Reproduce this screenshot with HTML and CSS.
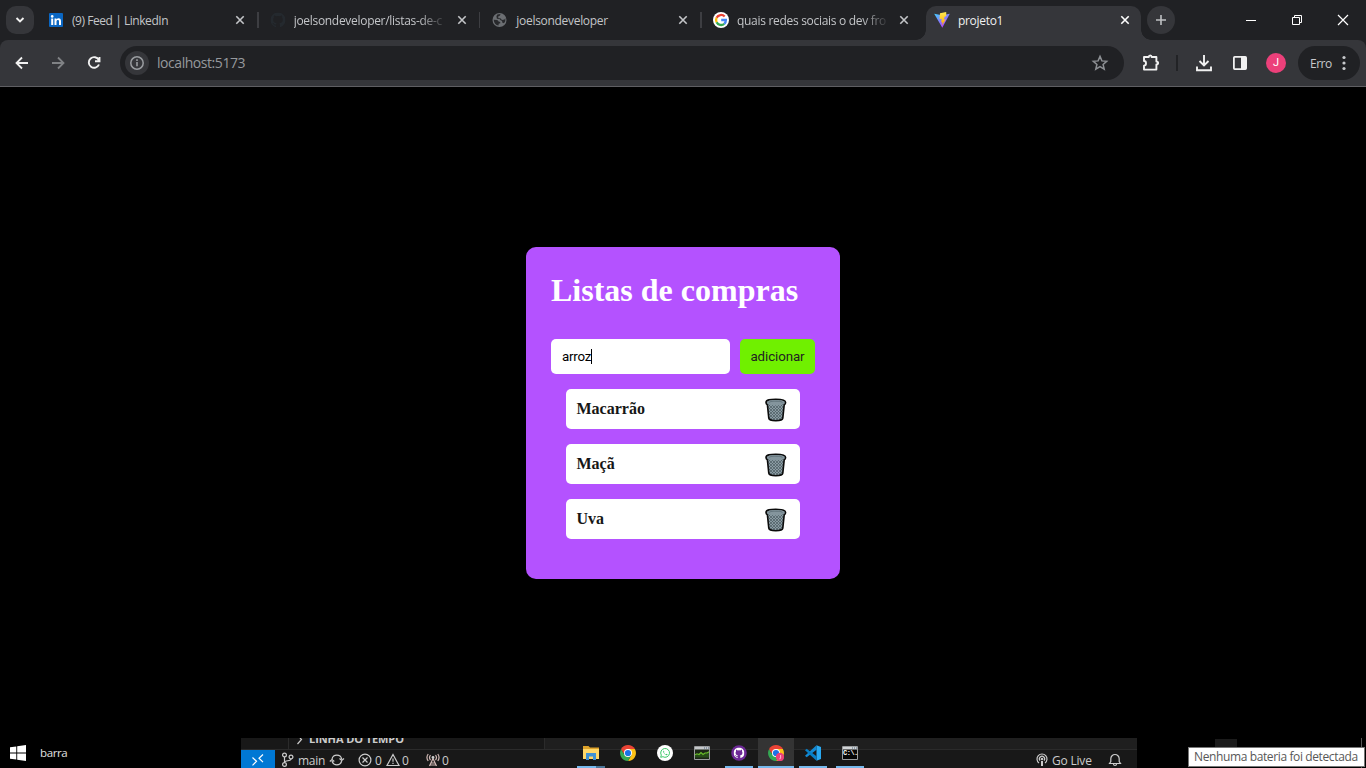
FILE: index.html
```html
<!DOCTYPE html>
<html lang="pt-BR">
<head>
<meta charset="utf-8">
<title>projeto1</title>
<link rel="stylesheet" href="styles.css">
</head>
<body>
<svg class="defs" width="0" height="0">
  <symbol id="close" viewBox="0 0 16 16"><path d="M4.300 4.300l7.400 7.400M11.700 4.300l-7.400 7.400" stroke="currentColor" stroke-width="1.600"/></symbol>
  <symbol id="github" viewBox="0 0 16 16"><path fill="currentColor" d="M8 0C3.58 0 0 3.58 0 8c0 3.54 2.29 6.53 5.47 7.59.4.07.55-.17.55-.38 0-.19-.01-.82-.01-1.49-2.01.37-2.53-.49-2.69-.94-.09-.23-.48-.94-.82-1.13-.28-.15-.68-.52-.01-.53.63-.01 1.08.58 1.23.82.72 1.21 1.87.87 2.33.66.07-.52.28-.87.51-1.07-1.78-.2-3.64-.89-3.64-3.95 0-.87.31-1.59.82-2.15-.08-.2-.36-1.02.08-2.12 0 0 .67-.21 2.2.82a7.4 7.4 0 014 0c1.53-1.04 2.2-.82 2.2-.82.44 1.1.16 1.92.08 2.12.51.56.82 1.27.82 2.15 0 3.07-1.87 3.75-3.65 3.95.29.25.54.73.54 1.48 0 1.07-.01 1.93-.01 2.2 0 .21.15.46.55.38A8 8 0 0016 8c0-4.42-3.58-8-8-8z"/></symbol>
  <symbol id="chrome" viewBox="0 0 16 16"><path fill="#ea4335" d="M8 8L1.100 4A8 8 0 0114.900 4z"/><path fill="#fbc116" d="M8 4h6.900A8 8 0 018 16l3.500-6z"/><path fill="#34a853" d="M1.100 4l3.500 6L8 12l3.400-2L8 16A8 8 0 011.100 4z"/><path fill="#ea4335" d="M1.100 4H8v4H3.400z"/><circle cx="8" cy="8" r="4" fill="#fff"/><circle cx="8" cy="8" r="3.100" fill="#1a73e8"/></symbol>
  <pattern id="mesh" width="3" height="3" patternUnits="userSpaceOnUse"><rect width="3" height="3" fill="#8a9ba3"/><path d="M0 0l3 3M3 0L0 3" stroke="#4a5a62" stroke-width=".7"/></pattern>
  <symbol id="trash" viewBox="0 0 22 24"><path d="M1 4.500C1 1.700 5.500 1.200 10.800 1.200s9.800.5 9.800 3.300c0 1.500-.6 2-1.400 2.400L17.800 20.200c-.2 1.900-3.600 2.500-7 2.500s-6.800-.6-7-2.500L2.400 6.900C1.600 6.500 1 6 1 4.500z" fill="url(#mesh)" stroke="#0b0b0b" stroke-width="1.600"/><path d="M2 4.500c0-1.700 4-2.400 8.800-2.400s8.800.7 8.800 2.400-4 2.900-8.800 2.900S2 6.200 2 4.500z" fill="#84959d"/><path d="M4.300 4.700c0-1.200 3-1.500 6.500-1.500s6.500.3 6.500 1.500" stroke="#5f7078" fill="none"/></symbol>
</svg>

<header class="tabstrip">
  <button class="tab-search"><svg width="28" height="28" viewBox="0 0 28 28"><path d="M10.500 12l3.500 3.500 3.500-3.500" fill="none" stroke="#f1f1f1" stroke-width="1.900"/></svg></button>
  <nav class="tabs">
    <div class="tab">
      <svg class="fav" width="16" height="16" viewBox="0 0 16 16"><rect x="1" y="1" width="14" height="14" rx="1" fill="#0a66c2"/><circle cx="4.200" cy="4.400" r="1.300" fill="#fff"/><path d="M3.200 6.500h2V13h-2zM6.500 6.500h2v1c.5-.8 1.200-1.200 2.100-1.200 1.700 0 2.400 1.100 2.400 2.900V13h-2V9.500c0-.8-.3-1.400-1.100-1.400-.9 0-1.400.6-1.400 1.500V13h-2z" fill="#fff"/></svg>
      <span class="title t1">(9) Feed | LinkedIn</span><svg class="x" width="16" height="16"><use href="#close"/></svg>
    </div>
    <div class="tab">
      <svg class="fav dim" width="16" height="16" viewBox="-.5 -.5 17 17"><use href="#github" width="16" height="16"/></svg>
      <span class="title fade t2">joelsondeveloper/listas-de-c</span><svg class="x" width="16" height="16"><use href="#close"/></svg>
    </div>
    <div class="tab">
      <svg class="fav" width="16" height="16" viewBox="0 0 16 16"><circle cx="8.500" cy="8" r="7" fill="#6b6e72"/><path d="M2.700 7.700l3.600.2 1.300 1.600 1.600.4.1 1.300-1.600.6-.2 1.700C4.700 13 2.900 11 2.700 7.700zM6.300 2.500l3.200-.5L9 3.600l-1.800.8.1 1.700 2.500.4 1.100 1.500 2.700-.5.700-1.600c.3 2.500-.1 4.100-1.400 5.300l-1.700-.6-.1-1.700-1.500-.7L8.500 7.100l-2.600-.3-.5-2.600z" fill="#28292c"/></svg>
      <span class="title t3">joelsondeveloper</span><svg class="x" width="16" height="16"><use href="#close"/></svg>
    </div>
    <div class="tab last">
      <svg class="fav" width="16" height="16" viewBox="0 0 16 16"><circle cx="8" cy="8" r="8" fill="#fff"/><g fill="none" stroke-width="2.300"><path d="M11.700 4.500A5 5 0 003.600 5.800" stroke="#ea4335"/><path d="M3.600 5.800a5 5 0 000 4.400" stroke="#fbbc05"/><path d="M3.600 10.200a5 5 0 007.700 1.600" stroke="#34a853"/><path d="M11.300 11.800A5 5 0 0012.900 8H8.200" stroke="#4285f4"/></g></svg>
      <span class="title fade t4">quais redes sociais o dev fro</span><svg class="x" width="16" height="16"><use href="#close"/></svg>
    </div>
    <div class="tab active">
      <svg class="fav" width="16" height="16" viewBox="0 0 16 16"><defs><linearGradient id="vg" x1="0" y1="0" x2=".7" y2="1"><stop stop-color="#41d1ff"/><stop offset="1" stop-color="#bd34fe"/></linearGradient><linearGradient id="yg" x1="0" y1="0" x2="0" y2="1"><stop stop-color="#ffea52"/><stop offset="1" stop-color="#ffa500"/></linearGradient></defs><path d="M.2 1.800L8 3.200l7.800-1.400L8.300 15.800z" fill="url(#vg)"/><path d="M12.200.1L6 1.200 5.500 7.200l2.200-.4-.5 3.600 1.300-.3-.5 3.500 3.800-6.300-2 .3 1-3 1.500-.3z" fill="url(#yg)"/></svg>
      <span class="title t5">projeto1</span><svg class="x" width="16" height="16"><use href="#close"/></svg>
    </div>
  </nav>
  <button class="newtab"><svg width="28" height="28"><path d="M9 14h10M14 9v10" stroke="#bfc1c4" stroke-width="1.600"/></svg></button>
  <div class="winctl">
    <svg width="46" height="40"><path d="M18 20.500h10" stroke="#fff"/></svg>
    <svg width="46" height="40"><path d="M18.500 17.500h7v7h-7zM20.500 17v-1.500h7v7H26" fill="none" stroke="#fff"/></svg>
    <svg width="46" height="40"><path d="M18 15l10 10M28 15L18 25" stroke="#fff" stroke-width="1.200"/></svg>
  </div>
</header>

<section class="toolbar">
  <svg class="nav" width="36" height="36" viewBox="0 0 36 36"><path d="M24 18H12.800M18 12.500L12.500 18l5.500 5.500" fill="none" stroke="#f1f1f1" stroke-width="1.800"/></svg>
  <svg class="nav" width="36" height="36" viewBox="0 0 36 36"><path d="M12 18h11.200M18 12.500l5.500 5.500-5.500 5.500" fill="none" stroke="#808285" stroke-width="1.800"/></svg>
  <svg class="nav" width="36" height="36" viewBox="0 0 36 36"><path d="M22.800 15A5.300 5.300 0 1023 19.500M23.500 12v4.300h-4.500" fill="none" stroke="#f1f1f1" stroke-width="1.900"/></svg>
  <div class="omnibox">
    <span class="info"><svg width="24" height="24"><circle cx="12" cy="12" r="6.200" fill="none" stroke="#9a9da1" stroke-width="1.500"/><path d="M12 11v4.300M12 8.300v1.600" stroke="#9a9da1" stroke-width="1.600"/></svg></span>
    <span class="url">localhost:5173</span>
    <svg class="star" width="18" height="18" viewBox="0 0 18 18"><path d="M9 2.400l1.900 4.500 4.800.4-3.600 3.200 1.100 4.700L9 12.700l-4.200 2.500 1.100-4.700-3.600-3.200 4.800-.4z" fill="none" stroke="#8d9094" stroke-width="1.500"/></svg>
  </div>
  <svg class="ext" width="20" height="20" viewBox="0 0 20 20"><path d="M3 4h4.800c0-1.200.4-1.600 1.400-1.600s1.400.4 1.400 1.600h4.800v4.600c1.200 0 1.700.4 1.700 1.400s-.5 1.400-1.700 1.400v5.200H3v-4c1.400 0 2-.9 2-2.300S4.400 8 3 8z" fill="none" stroke="#f1f1f1" stroke-width="1.900" stroke-linejoin="round"/></svg>
  <i class="divider"></i>
  <svg class="dl" width="20" height="20" viewBox="0 0 20 20"><path d="M10 2v10M5.500 8l4.500 4.500L14.500 8M3 13.500v3.700h14v-3.700" fill="none" stroke="#f1f1f1" stroke-width="1.900"/></svg>
  <svg class="side" width="16" height="16"><rect x="1.900" y="1.900" width="12.200" height="12.200" rx=".8" fill="none" stroke="#f1f1f1" stroke-width="1.800"/><path d="M9 2h5v12H9z" fill="#f1f1f1"/></svg>
  <span class="avatar">J</span>
  <span class="error">Erro<svg width="6" height="16"><g fill="#c7c9cc"><circle cx="3" cy="2.500" r="1.600"/><circle cx="3" cy="8" r="1.600"/><circle cx="3" cy="13.500" r="1.600"/></g></svg></span>
</section>

<main class="page">
  <section class="card">
    <h1>Listas de compras</h1>
    <div class="form"><div class="field">arroz<i class="caret"></i></div><button class="add">adicionar</button></div>
    <ul class="list">
      <li><span>Macarrão</span><svg width="22" height="24"><use href="#trash"/></svg></li>
      <li><span>Maçã</span><svg width="22" height="24"><use href="#trash"/></svg></li>
      <li><span>Uva</span><svg width="22" height="24"><use href="#trash"/></svg></li>
    </ul>
  </section>
</main>

<footer class="taskbar">
  <div class="start">
    <svg width="16" height="16"><path d="M0 2.300L6.300 1.400V7.500H0zM7.200 1.300L16 0v7.500H7.200zM0 8.500h6.300v6.100L0 13.700zM7.200 8.500H16V16l-8.800-1.300z" fill="#fff"/></svg>
    <span>barra</span>
  </div>
  <div class="editor">
    <div class="panel"><div class="rail"></div><div class="timeline"><svg width="8" height="12"><path d="M1.500 1l4 4.500L1.500 10" fill="none" stroke="#ccc" stroke-width="1.200"/></svg><b>LINHA DO TEMPO</b></div><div class="rest"></div></div>
    <div class="status">
      <span class="remote"><svg width="14" height="14"><path d="M1.500 4.500l4 3.800-4 4M12 1.500L8 5.200l4 4" fill="none" stroke="#fff" stroke-width="1.200"/></svg></span>
      <svg class="branch" width="14" height="16"><g fill="none" stroke="#ccc" stroke-width="1.200"><circle cx="3.500" cy="3" r="1.900"/><circle cx="3.500" cy="12.500" r="1.900"/><circle cx="10" cy="5" r="1.900"/><path d="M3.500 5v5.600M10 7c0 2.500-6.500 1-6.500 3.500"/></g></svg>
      <span class="main">main</span>
      <svg class="sync" width="16" height="14"><g fill="none" stroke="#ccc" stroke-width="1.200"><path d="M3 6a5 5 0 019.700 0M12.700 8A5 5 0 013 8M.8 8.500L3 6.500l2.300 2M10.500 5.500l2.200 2 2.300-2"/></g></svg>
      <svg class="err" width="14" height="14"><g fill="none" stroke="#ccc" stroke-width="1.200"><circle cx="7" cy="7" r="5.900"/><path d="M4.500 4.500l5 5M9.500 4.500l-5 5"/></g></svg>
      <span class="n1">0</span>
      <svg class="warn" width="14" height="14"><path d="M7 1.500l6 11H1zM7 5.500v3.300M7 9.800v1.300" fill="none" stroke="#ccc" stroke-width="1.200"/></svg>
      <span class="n2">0</span>
      <svg class="radio" width="14" height="14"><path d="M7 5.500L3.500 13M7 5.500l3.500 7.500M5 10h4M4.200 12h5.600M4.500 2a4 4 0 000 5M9.500 2a4 4 0 010 5M2.200 1a6 6 0 000 7M11.800 1a6 6 0 010 7" fill="none" stroke="#d0b8b4" stroke-width="1.200"/><circle cx="7" cy="4.500" r="1.400" fill="#ccc"/></svg>
      <span class="n3">0</span>
      <svg class="live" width="12" height="14"><path d="M3 10A5 5 0 119 10M4 7.500a2.600 2.600 0 114 0" fill="none" stroke="#ccc" stroke-width="1.200"/><circle cx="6" cy="6" r="1.200" fill="#ccc"/><path d="M5 8h2v5H5z" fill="#ccc"/></svg>
      <span class="golive">Go Live</span>
      <svg class="bell" width="14" height="14"><path d="M1.500 10.500l1.300-2V5.700a4.200 4.200 0 018.400 0v2.800l1.300 2zM5.500 11c0 2 3 2 3 0" fill="none" stroke="#ccc" stroke-width="1.200"/></svg>
    </div>
    <div class="apps">
      <span class="app open split"><svg width="16" height="16"><path d="M0 1h5.500L7 2.500h9v3H0z" fill="#dda22a"/><path d="M0 4h16v10H0z" fill="#ffd768"/><path d="M3 8h10v7h-3v-3.500H6V15H3z" fill="#3f91d4"/></svg></span>
      <span class="app"><svg width="16" height="16"><use href="#chrome"/></svg></span>
      <span class="app"><svg width="16" height="16"><circle cx="8" cy="8" r="8" fill="#fff"/><path d="M3.700 12.300l.6-2.200a4.400 4.400 0 111.600 1.600z" fill="none" stroke="#3cc867"/><path d="M6.500 5.500c-1 .8.300 3 1.500 4s2.200 1 2.700.1l-1.300-.8-.6.6C8 9 7.400 8.400 7 7.500l.4-.6z" fill="#3cc867"/></svg></span>
      <span class="app"><svg width="16" height="14"><path d="M.5.500h15v13H.5z" fill="#1c2517" stroke="#9a9c9e"/><path d="M1 1h14v2.500H1z" fill="#c5c8cb"/><path d="M10 2h1M12 2h1M14 2h1" stroke="#48607a"/><path d="M1 9l2-1.500L5 8.500l2-2 2 2 2-2h2l2-1v6H1z" fill="#274c18"/><path d="M1 8.800l2-1 2 .7 2-2 2 2 2-1.500h2l2-1.300" fill="none" stroke="#69bd2a" stroke-width="1.200"/></svg></span>
      <span class="app open"><svg width="16" height="16"><circle cx="8" cy="8" r="7.800" fill="#6d2996"/><g color="#fff"><use href="#github" x="2.600" y="2.600" width="10.800" height="10.800"/></g></svg></span>
      <span class="app open current"><svg width="16" height="16"><use href="#chrome"/><circle cx="12" cy="12" r="4.200" fill="#ec407a"/><path d="M12.600 10v3q0 1-1.200.8" fill="none" stroke="#ffb6cd"/></svg></span>
      <span class="app open"><svg width="16" height="16"><path d="M11.500.2L16 2v12l-4.500 1.800z" fill="#29a9f1"/><path d="M11.500.2v4.500L1.700 12.300 0 10.700z" fill="#1389d3"/><path d="M0 5.300L1.700 3.700l9.800 7.600v4.500z" fill="#087fc6"/></svg></span>
      <span class="app open"><svg width="16" height="14"><path d="M.5.500h15v13H.5z" fill="#050505" stroke="#9a9c9e"/><path d="M1 1h14v2.500H1z" fill="#d2d5d7"/><path d="M10 2h1M12 2h1M14 2h1" stroke="#48607a"/></svg><em>C:\.</em></span>
    </div>
  </div>
  <div class="tray"><i class="chip"></i><i class="peek"></i><span class="tip">Nenhuma bateria foi detectada</span></div>
</footer>
</body>
</html>
```
FILE: styles.css
```css
* { box-sizing: border-box; }
body { margin: 0; width: 1366px; height: 768px; overflow: hidden; background: #000; display: flex; flex-direction: column; font: 12px "Open Sans", "Noto Sans", sans-serif; }
svg { display: block; flex: none; }
button { border: 0; padding: 0; }
.defs { position: absolute; }

.tabstrip { height: 40px; flex: none; background: #202124; box-shadow: 0 8px 0 #202124; display: flex; align-items: flex-start; }
.tab-search { width: 28px; height: 28px; margin: 6px 3px 0 6px; background: #35363a; border-radius: 10px; }
.tabs { display: flex; height: 40px; }
.tab { width: 221.67px; padding-left: 11px; display: flex; align-items: center; position: relative; color: #c3c5c8; }
.tab::after { content: ""; position: absolute; right: 0; top: 12px; width: 1.500px; height: 16px; background: #3d3e42; }
.tab.last::after, .tab.active::after { display: none; }
.tab.last { width: 224px; }
.title { width: 151px; margin-left: 8px; white-space: nowrap; line-height: 20px; padding-top: 1px; letter-spacing: -.3px; }
.t1 { letter-spacing: -.45px; }
.t3 { padding-left: 1px; }
.fade { -webkit-mask-image: linear-gradient(to right, #000 125px, transparent 153px); mask-image: linear-gradient(to right, #000 125px, transparent 153px); }
.x { margin-left: 9px; }
.last .x { margin-left: 8px; }
.dim { color: #24292e; }
.tab.active { width: 215px; height: 34px; margin-top: 6px; padding: 0 0 6px 8px; background: #35363a; border-radius: 10px 10px 0 0; color: #f1f1f1; }
.tab.active::before { content: ""; position: absolute; inset: auto -10px 0 -10px; height: 10px; background: radial-gradient(circle at 0 0, transparent 9.500px, #35363a 10px) 0 0 / 10px 10px no-repeat, radial-gradient(circle at 100% 0, transparent 9.500px, #35363a 10px) 100% 0 / 10px 10px no-repeat; }
.tab.active .x { margin-left: 8px; color: #fff; }
.newtab { width: 28px; height: 28px; margin: 6px 0 0 6px; border-radius: 50%; background: #35363a; }
.winctl { display: flex; margin-left: auto; }

.toolbar { height: 47px; flex: none; background: #35363a; border-bottom: 1px solid #5f5f63; border-radius: 8px 8px 0 0; display: flex; align-items: center; padding-left: 4px; }
.omnibox { width: 1004px; height: 34px; margin-left: 8px; border-radius: 17px; background: #202124; display: flex; align-items: center; padding: 0 15px 0 5px; }
.info { width: 24px; height: 24px; border-radius: 50%; background: #35363a; }
.url { margin-left: 8px; padding-bottom: 1px; font-size: 14px; color: #96999d; letter-spacing: -.45px; }
.star { margin-left: auto; }
.ext { margin-left: 17px; }
.divider { width: 2px; height: 16px; background: #222326; margin-left: 15px; }
.dl { margin-left: 16px; }
.side { margin-left: 18px; }
.avatar { width: 20px; height: 20px; margin-left: 18px; border-radius: 50%; background: #ec407a; color: #fff; font: 11px/20px Roboto, sans-serif; text-align: center; }
.error { width: 62px; height: 34px; margin-left: 12px; padding: 0 13px 0 12px; display: flex; align-items: center; justify-content: space-between; border-radius: 17px; background: #202124; color: #c7c9cc; letter-spacing: -.5px; }

.page { height: 651px; flex: none; display: flex; align-items: center; justify-content: center; padding-top: 1px; }
.card { width: 314px; height: 332px; background: #b452ff; border-radius: 10px; padding: 25px; }
h1 { margin: 0; height: 67px; color: #fff; font: bold 32px/37px "Liberation Serif", serif; white-space: nowrap; }
.form { display: flex; gap: 10px; }
.field { width: 179px; height: 35px; border-radius: 5px; background: #fff; color: #000; padding-left: 11px; display: flex; align-items: center; font: 13.333px Roboto, sans-serif; letter-spacing: -.2px; }
.caret { width: 1px; height: 15px; background: #000; }
.add { width: 75px; height: 35px; border-radius: 5px; background: #70f000; color: #222; font: 13.333px Roboto, sans-serif; letter-spacing: -.1px; }
.list { list-style: none; margin: 15px 0 0; padding: 0 15px; display: flex; flex-direction: column; gap: 15px; }
.list li { height: 40px; border-radius: 5px; background: #fff; display: flex; align-items: center; justify-content: space-between; padding: 2px 13px 0 10.500px; color: #161616; font: bold 16px "Liberation Serif", serif; }
.list span { padding-bottom: 2px; }

.taskbar { height: 30px; flex: none; display: flex; color: #fff; }
.start { width: 241px; display: flex; align-items: center; padding-left: 10px; gap: 14px; color: #e0e0e0; font-size: 11.500px; letter-spacing: -.4px; }
.start span { padding-bottom: 2px; }
.editor { width: 896px; position: relative; background: #181818; }
.panel { height: 12px; display: flex; border-bottom: 1px solid #2b2b2b; overflow: hidden; }
.rail { width: 48px; border-right: 1px solid #2b2b2b; }
.timeline { width: 256px; border-right: 1px solid #2b2b2b; display: flex; padding-left: 7px; color: #ccc; font-size: 11px; line-height: 12px; }
.timeline svg { margin: -4px 5px 0 0; }
.timeline b { margin-top: -5px; letter-spacing: -.08px; white-space: nowrap; }
.rest { flex: 1; background: #1f1f1f; }
.status { height: 18px; display: flex; align-items: center; color: #ccc; line-height: 18px; padding-top: 2px; }
.status span { white-space: nowrap; letter-spacing: -.2px; padding-top: 1px; }
.status .remote { width: 34px; height: 18px; background: #0078d4; display: flex; align-items: center; justify-content: center; margin-top: -2px; padding-top: 2px; }
.branch { margin-left: 6px; }
.status .main { width: 28px; margin-left: 3px; letter-spacing: -.3px; }
.sync { margin-left: 3px; }
.err { margin-left: 13px; }
.n1 { width: 8px; margin-left: 3px; }
.warn { margin-left: 3px; }
.n2 { width: 8px; margin-left: 2px; }
.radio { margin-left: 16px; }
.n3 { width: 8px; margin-left: 2px; }
.live { margin-left: auto; }
.golive { width: 41px; margin-left: 4px; }
.bell { margin: 0 15px 0 15px; }
.apps { position: absolute; left: 332px; top: 0; display: flex; gap: 1px; }
.app { width: 36px; height: 30px; display: flex; align-items: center; justify-content: center; position: relative; }
.open::after { content: ""; position: absolute; left: 4px; right: 4px; bottom: 0; height: 2px; background: #76b9ed; }
.split::after { background: linear-gradient(to right, #76b9ed 19px, #4b7698 19px); }
.current { background: #343434; }
.current::after { left: 0; right: 0; }
.app em { position: absolute; left: 11px; top: 11px; font: normal bold 7px/9px "Liberation Mono", monospace; color: #fff; letter-spacing: -.5px; }
.tray { flex: 1; position: relative; }
.chip { position: absolute; left: 78px; top: 1px; width: 22px; height: 10px; background: #1b1b1b; }
.peek { position: absolute; left: 224px; top: 0; width: 1px; height: 30px; background: #555; }
.tip { position: absolute; left: 51px; top: 9px; width: 177px; height: 20px; border: 1px solid #767676; background: #fff; color: #575757; line-height: 18px; padding-left: 5px; white-space: nowrap; letter-spacing: -.38px; }
```
